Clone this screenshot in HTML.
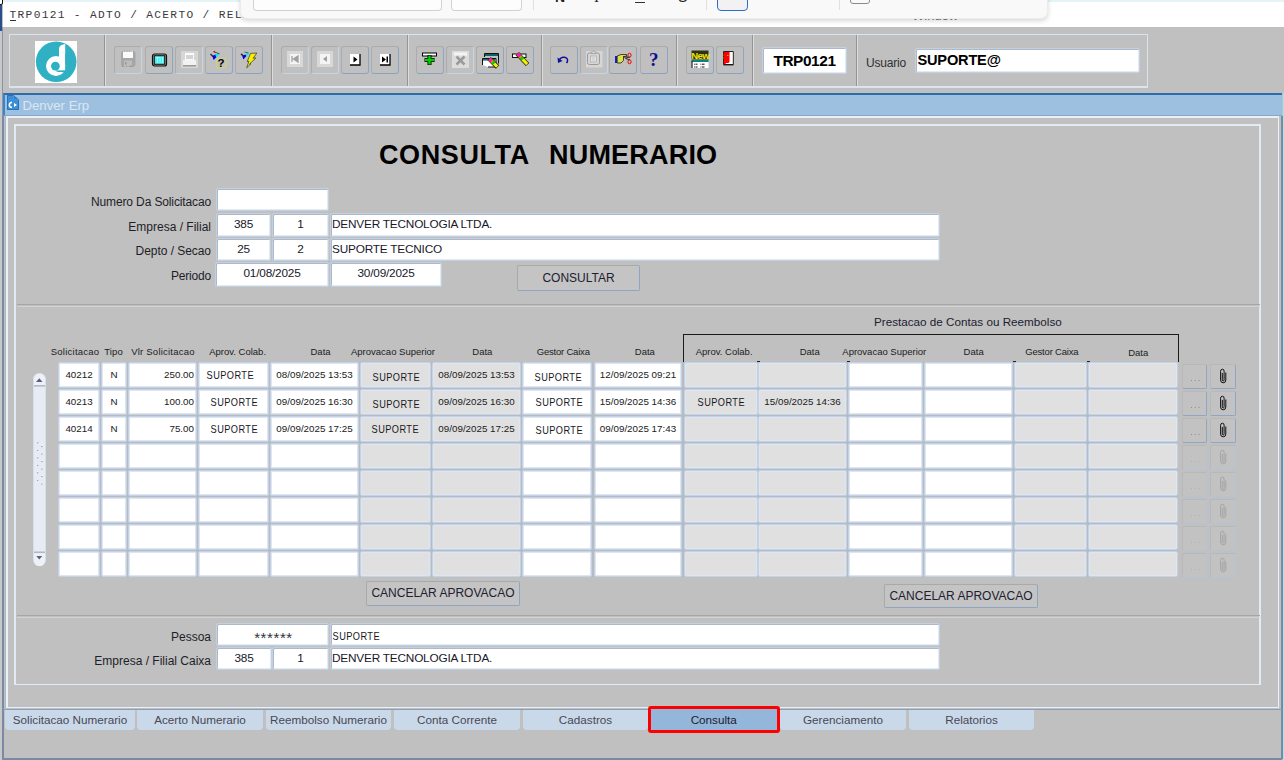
<!DOCTYPE html>
<html><head><meta charset="utf-8">
<style>
*{margin:0;padding:0;box-sizing:border-box}
html,body{width:1284px;height:760px;overflow:hidden;background:#c0c0c0;font-family:"Liberation Sans",sans-serif;color:#202020}
.a{position:absolute}
.fld{position:absolute;background:#fff;border:1px solid #c2d0e2;border-radius:2px;box-shadow:inset 1px 1px 0 #adb9c8,inset -1px -1px 0 #e2eaf4;font-size:11.8px;letter-spacing:-0.2px;color:#18182a;line-height:21px;white-space:nowrap;overflow:hidden}
.lbl{position:absolute;font-size:12px;letter-spacing:0;color:#1e1e28;white-space:nowrap;text-align:right;line-height:14px}
.btn{position:absolute;border:1px solid #a9a9a9;border-right-color:#8ea6c4;border-bottom-color:#8ea6c4;border-radius:2px;background:#c4c4c4;font-size:12px;color:#202030;text-align:center;white-space:nowrap}
.tb{position:absolute;top:46px;width:28px;height:28px;border:1px solid #acacac;border-right:1.5px solid #8fa6c2;border-bottom:1.5px solid #8ca3c0;border-radius:3px}
.sep{position:absolute;top:35px;width:2px;height:51px;border-left:1px solid #959595;border-right:1px solid #dcdcdc}
.hd{position:absolute;font-size:9.5px;color:#202020;white-space:nowrap}
.c{position:absolute;background:#fff;border:1px solid #c4d2e4;border-radius:2px;box-shadow:inset 1px 1px 0 #dde6f2,inset -1px -1px 0 #dde6f2;font-size:9.8px;color:#202020;white-space:nowrap;overflow:hidden;text-align:center}
.g{background:#e0e0e0}
.s{position:relative;display:inline-block;font-size:10.6px;transform:scaleX(0.87);letter-spacing:0.5px;color:#18181c}
.tab{position:absolute;top:710px;height:20px;background:#cad9ea;border-radius:0 0 4px 4px;font-size:11.7px;letter-spacing:0;color:#484854;text-align:center;line-height:20px}
</style></head><body>

<!-- window title strip -->
<div class="a" style="left:3px;top:0;width:1281px;height:27px;background:#fff"></div>
<div class="a" style="left:3px;top:0;width:1281px;height:2px;background:#e4f4f8"></div>
<div class="a" style="left:0;top:5px;width:2px;height:26px;background:#2a4f8a"></div>
<div class="a" style="left:-3px;top:-2px;width:6px;height:7px;background:#fff;border:1px solid #111;border-radius:2px"></div>
<div class="a" style="left:9.5px;top:8px;font:11.2px/14px 'Liberation Mono',monospace;letter-spacing:1.33px;color:#3a3a3a;white-space:pre">TRP0121 - ADTO / ACERTO / RELATORIO DE VIAGEM</div>
<div class="a" style="left:10px;top:20px;width:6px;height:1px;background:#333"></div>

<!-- floating popup -->
<div class="a" style="left:912px;top:8px;font-size:13px;color:#777">Window</div>
<div class="a" style="left:240px;top:-12px;width:808px;height:31px;background:#f9f9f9;border-radius:7px;box-shadow:0 2px 5px rgba(0,0,0,0.16);border:1px solid #ececec"></div>
<div class="a" style="left:253px;top:-6px;width:189px;height:17px;background:#fdfdfd;border:1px solid #d2d2d2;border-top-color:#e6e6e6;border-radius:4px"></div>
<div class="a" style="left:451px;top:-6px;width:71px;height:17px;background:#fdfdfd;border:1px solid #d2d2d2;border-top-color:#e6e6e6;border-radius:4px"></div>
<div class="a" style="left:533px;top:0;width:1px;height:10px;background:#e0e0e0"></div>
<div class="a" style="left:555px;top:-11.5px;font-size:14px;font-weight:bold;color:#222">N</div>
<div class="a" style="left:594px;top:-11.5px;font-family:'Liberation Serif';font-size:15px;color:#222">I</div>
<div class="a" style="left:635px;top:-13px;font-size:14px;color:#222">U</div>
<div class="a" style="left:635px;top:1.5px;width:10px;height:1px;background:#333"></div>
<div class="a" style="left:678px;top:-11.5px;font-size:14px;color:#222">S</div>
<div class="a" style="left:706px;top:0;width:1px;height:10px;background:#e0e0e0"></div>
<div class="a" style="left:717px;top:-8px;width:31px;height:19px;background:#f2f2f2;border:1px solid #2a6fc4;border-radius:4px"></div>
<div class="a" style="left:839px;top:0;width:1px;height:10px;background:#e0e0e0"></div>
<div class="a" style="left:850px;top:-8px;width:20px;height:12px;background:#fafafa;border:1px solid #8a8a8a;border-radius:3px"></div>

<!-- left window frame -->
<div class="a" style="left:0;top:31px;width:2px;height:729px;background:#c8c8c8"></div>
<div class="a" style="left:2px;top:27px;width:1px;height:733px;background:#8a96a4"></div>

<!-- toolbar panel -->
<div class="a" style="left:9px;top:34px;width:1139px;height:54px;border:1px solid #dae4f0;border-bottom-width:2px"></div>


<!-- separators -->
<div class="sep" style="left:104px"></div>
<div class="sep" style="left:271px"></div>
<div class="sep" style="left:407px"></div>
<div class="sep" style="left:541px"></div>
<div class="sep" style="left:676px"></div>
<div class="sep" style="left:752px"></div>
<div class="sep" style="left:856px"></div>

<!-- logo -->
<div class="a" style="left:35px;top:41px;width:42px;height:42px;background:#fff">
<svg width="42" height="42" viewBox="0 0 42 42"><circle cx="21.2" cy="20.8" r="20.3" fill="#30b0c3"/>
<circle cx="21" cy="25" r="10" fill="#fff"/>
<path d="M24 7.5 C24 5.2 26.5 3.6 30.2 3 V29.3 H24 Z" fill="#fff"/>
<rect x="30.2" y="13" width="3" height="24" fill="#30b0c3"/>
<circle cx="20.4" cy="25.1" r="4.4" fill="#30b0c3"/>
<path d="M20.4 29.4 L31 29.3 L31 33 C29 31.2 27 30.8 24.5 31 C23 31.1 21.5 30.5 20.4 29.4 Z" fill="#30b0c3"/></svg></div>

<!-- toolbar buttons -->
<div class="tb" style="left:114px;border-right-color:#c6d4e6;border-bottom-color:#c6d4e6"><svg class="a" style="left:5px;top:3px" width="17" height="18" viewBox="0 0 17 18"><rect x="1" y="1" width="14.5" height="15.5" rx="2" fill="#a6a6a6"/><rect x="3" y="1.5" width="10" height="6.5" fill="#fafafa"/><path d="M4 1.2h1M6.5 1.2h1M9 1.2h1" stroke="#888" stroke-width="0.8"/><rect x="4" y="10.5" width="8" height="6" fill="#bcbcbc"/><rect x="5" y="12" width="1.5" height="2.5" fill="#9a9a9a"/><path d="M2 16.3h1.5M6 16.3h1M9 16.3h4" stroke="#8a8a8a" stroke-width="0.8"/></svg></div>
<div class="tb" style="left:145px"><svg class="a" style="left:5px;top:5px" width="18" height="16" viewBox="0 0 18 16"><rect x="1.5" y="2" width="14" height="12" rx="2" fill="#9a9a9a" stroke="#101010" stroke-width="1.2"/><rect x="3.3" y="3.8" width="10.4" height="8.4" fill="none" stroke="#101010" stroke-width="1.1"/><rect x="3.9" y="4.4" width="9.2" height="7.2" fill="#48f0f0"/><path d="M5 5.5h3M6.5 5v6M9 5v6M11.5 5v6" stroke="#b8ffff" stroke-width="0.7"/></svg></div>
<div class="tb" style="left:175px;border-right-color:#c6d4e6;border-bottom-color:#c6d4e6"><svg class="a" style="left:5px;top:4px" width="18" height="18" viewBox="0 0 18 18"><rect x="0" y="0" width="17" height="17" fill="#d6d6d6"/><rect x="4" y="2" width="9" height="7" fill="#fafafa"/><path d="M5 5h7M5 7h7" stroke="#9a9a9a" stroke-width="0.8"/><rect x="2" y="9" width="13" height="5" fill="#f2f2f2"/><rect x="2" y="14" width="13" height="1.5" fill="#9a9a9a"/></svg></div>
<div class="tb" style="left:205px"><svg class="a" style="left:-1px;top:-1px" width="28" height="28" viewBox="0 0 28 28"><path d="M5.5 8 L8 10.5" stroke="#383838" stroke-width="1.6"/><path d="M7.3 10 L11 8.3 L11.6 11 L8.6 14 Z" fill="#0000e8"/><path d="M10 8.6 L14.6 7.6 L12.2 11 L11.2 11 Z" fill="#00f0f0"/><path d="M8.8 5.8 L14.5 7.8" stroke="#303030" stroke-width="0.8"/><circle cx="9.3" cy="5.7" r="0.9" fill="#d02020"/><rect x="11.8" y="12.8" width="9" height="8.8" fill="none" stroke="#f0f000" stroke-width="0.9" stroke-dasharray="0.9 1.1"/><text x="12.6" y="20.6" font-family="Liberation Sans" font-weight="bold" font-size="11.5" fill="#000">?</text></svg></div>
<div class="tb" style="left:235px"><svg class="a" style="left:-1px;top:-1px" width="28" height="28" viewBox="0 0 28 28"><path d="M6 8 L8.5 9.8" stroke="#303030" stroke-width="1.6"/><path d="M7.3 10 L10.5 8.2 L11.5 10 L8.3 13.5 Z" fill="#0000e8"/><path d="M9.7 8.2 L14 6.2 L13 9.2 L11.3 9.6 Z" fill="#00f0f0"/><path d="M9.5 6 L13.5 7" stroke="#404040" stroke-width="0.8"/><path d="M15.5 7.4 L21.8 7 L18.2 12.2 L20.8 12 L14.6 18 L16 17.7 L11.7 21.8 L13.9 15.3 L12.2 15.6 Z" fill="#f4f000" stroke="#1a1a1a" stroke-width="0.6"/></svg></div>

<div class="tb" style="left:281px;border-right-color:#c6d4e6;border-bottom-color:#c6d4e6"><svg class="a" style="left:4px;top:3px" width="18" height="18" viewBox="0 0 18 18"><rect x="1" y="1" width="16" height="16" fill="#d8d8d8"/><rect x="4" y="4" width="10" height="10" fill="#f4f4f4"/><path d="M6 6v6M12 6v6L7.5 9Z" fill="#a0a0a0" stroke="#a0a0a0" stroke-width="1.3"/></svg></div>
<div class="tb" style="left:311px;border-right-color:#c6d4e6;border-bottom-color:#c6d4e6"><svg class="a" style="left:4px;top:3px" width="18" height="18" viewBox="0 0 18 18"><rect x="1" y="1" width="16" height="16" fill="#d8d8d8"/><rect x="4" y="4" width="10" height="10" fill="#f4f4f4"/><path d="M11 6v6L7 9Z" fill="#a0a0a0"/></svg></div>
<div class="tb" style="left:341px"><svg class="a" style="left:6px;top:5px" width="16" height="16" viewBox="0 0 16 16"><rect x="2" y="2" width="10" height="11" fill="#fff"/><path d="M12 2v11H2" fill="none" stroke="#000" stroke-width="1.3"/><path d="M5.5 4.5v6L9.5 7.5Z" fill="#000"/></svg></div>
<div class="tb" style="left:371px"><svg class="a" style="left:6px;top:5px" width="16" height="16" viewBox="0 0 16 16"><rect x="2" y="2" width="10" height="11" fill="#fff"/><path d="M12 2v11H2" fill="none" stroke="#000" stroke-width="1.3"/><path d="M4 4.5v6L8 7.5Z M8.5 4.5h1.5v6H8.5Z" fill="#000"/></svg></div>

<div class="tb" style="left:416px"><svg class="a" style="left:4px;top:4px" width="18" height="18" viewBox="0 0 18 18"><rect x="1.5" y="2" width="14" height="3" fill="#fff" stroke="#000" stroke-width="1"/><path d="M8.5 4v10M3.5 9h10" stroke="#000" stroke-width="4"/><path d="M8.5 4.5v9M4 9h9" stroke="#00d000" stroke-width="2.4"/></svg></div>
<div class="tb" style="left:446px;border-right-color:#c6d4e6;border-bottom-color:#c6d4e6"><svg class="a" style="left:5px;top:4px" width="18" height="18" viewBox="0 0 18 18"><rect x="0" y="0" width="17" height="17" fill="#dcdcdc"/><rect x="2" y="1.5" width="13" height="3" fill="#f4f4f4"/><path d="M4.5 5.5L12.5 13.5M12.5 5.5L4.5 13.5" stroke="#9a9a9a" stroke-width="2.5"/></svg></div>
<div class="tb" style="left:476px"><svg class="a" style="left:2px;top:2px" width="22" height="20" viewBox="0 0 22 20"><path d="M5.5 8 V4.5 H19.5 V14.5" fill="none" stroke="#111" stroke-width="1"/><rect x="6" y="5" width="13" height="2" fill="#0c6464"/><path d="M3.5 16 V9.5 H17 V18 H9" fill="#fff" stroke="#111" stroke-width="1"/><rect x="4" y="10" width="12.5" height="1.6" fill="#187070"/><path d="M10.2 9.7 L18.5 18" stroke="#111" stroke-width="4.6"/><path d="M10.5 10 L18.2 17.7" stroke="#f0f000" stroke-width="3.2"/><path d="M10.5 10 L12.8 12.3" stroke="#ff10c0" stroke-width="3.2"/><path d="M12.7 12.2 L13.5 13" stroke="#ff7000" stroke-width="3.2"/><path d="M13.5 13 L15.2 14.7" stroke="#00d000" stroke-width="3.2"/></svg></div>
<div class="tb" style="left:506px"><svg class="a" style="left:1px;top:2px" width="22" height="20" viewBox="0 0 22 20"><rect x="4.5" y="5" width="13.5" height="3.5" fill="#fff" stroke="#111" stroke-width="1"/><path d="M9.3 4.6 L19.5 15.5" stroke="#111" stroke-width="4.6"/><path d="M9.6 4.9 L19.2 15.2" stroke="#f0f000" stroke-width="3.2"/><path d="M9.6 4.9 L12.2 7.7" stroke="#ff10c0" stroke-width="3.2"/><path d="M12.1 7.6 L12.9 8.5" stroke="#ff7000" stroke-width="3.2"/><path d="M12.9 8.5 L14.8 10.5" stroke="#00d000" stroke-width="3.2"/></svg></div>

<div class="tb" style="left:550px"><svg class="a" style="left:4px;top:5px" width="16" height="16" viewBox="0 0 16 16"><path d="M4.5 7.5 C6 5 9.5 4.5 11.5 6 C13 7.2 12.8 9.5 11.5 11" fill="none" stroke="#10109a" stroke-width="1.5"/><path d="M2.5 5.5 L3 11 L7.5 9 Z" fill="#10109a"/></svg></div>
<div class="tb" style="left:580px;border-right-color:#c6d4e6;border-bottom-color:#c6d4e6"><svg class="a" style="left:4px;top:3px" width="18" height="18" viewBox="0 0 18 18"><rect x="1" y="1" width="16.5" height="16.5" fill="#d6d6d6"/><rect x="2.5" y="3" width="12" height="11.5" rx="2" fill="none" stroke="#9a9a9a" stroke-width="1"/><path d="M6 3.5 V2.2 Q8.5 0.5 11 2.2 V3.5 Z" fill="#dcdcdc" stroke="#9a9a9a" stroke-width="0.8"/><rect x="5.5" y="6" width="6" height="6" fill="#e4e4e4" stroke="#a8a8a8" stroke-width="0.7"/><path d="M7 8h3M7 10h3" stroke="#b0b0b0" stroke-width="0.6"/></svg></div>
<div class="tb" style="left:609px"><svg class="a" style="left:3px;top:5px" width="22" height="18" viewBox="0 0 22 18"><rect x="2" y="4" width="2.2" height="7" fill="#1020d0"/><path d="M4.2 4 L8 2.5 L13.5 2.5 L13.5 4.2 L10.5 4.5 L10.5 8.5 L8 11 L4.2 11 Z" fill="#e0e040" stroke="#202020" stroke-width="0.8"/><path d="M10 5 H15" stroke="#202020" stroke-width="1"/><ellipse cx="16.5" cy="3.2" rx="1.6" ry="2" fill="none" stroke="#f00000" stroke-width="1"/><ellipse cx="16.5" cy="9.8" rx="1.6" ry="2" fill="none" stroke="#f00000" stroke-width="1"/><path d="M12.5 6.5 L17 5 M12.5 6.5 L17 8" stroke="#202020" stroke-width="0.8"/></svg></div>
<div class="tb" style="left:640px"><svg class="a" style="left:7px;top:4px" width="14" height="18" viewBox="0 0 14 18"><text x="1" y="15" font-family="Liberation Serif" font-weight="bold" font-size="19" fill="#10108c">?</text></svg></div>

<div class="tb" style="left:686px"><svg class="a" style="left:-1px;top:-1px" width="28" height="28" viewBox="0 0 28 28"><rect x="5.5" y="4.5" width="17" height="9" fill="#303018"/><text x="5.2" y="12.6" font-family="Liberation Sans" font-weight="bold" font-size="9.6" fill="#e8e800" letter-spacing="-0.6">New</text><rect x="5.5" y="14" width="17" height="2" fill="#108080"/><rect x="6.5" y="16" width="16" height="6" fill="#fff"/><rect x="5.5" y="15" width="1" height="7" fill="#111"/><path d="M8 18.2h0.8M9.5 18.2h2M14.5 18.2h0.8M16 18.2h2.5M8 21h0.8M9.5 21h2M14.5 21h0.8M16 21h2.5" stroke="#111" stroke-width="1"/></svg></div>
<div class="tb" style="left:716px"><svg class="a" style="left:-1px;top:-1px" width="28" height="28" viewBox="0 0 28 28"><path d="M7.5 18.5 V5.5 H17.3 V18.5 Z" fill="#fff" stroke="#222" stroke-width="1"/><path d="M7.8 6 H13.5 V16 L12.5 17 L10 17 L9.3 18.2 H7.8 Z" fill="#ff0000"/><circle cx="11.8" cy="9.5" r="0.6" fill="#f0f000"/><rect x="6.3" y="8.6" width="1.2" height="0.9" fill="#c8c800"/><rect x="6.3" y="11.5" width="1.2" height="0.9" fill="#c8c800"/><rect x="7.5" y="18.5" width="10" height="0.9" fill="#111"/></svg></div>

<div class="fld" style="left:762px;top:47px;width:85px;height:27px;font-weight:bold;font-size:15.4px;letter-spacing:-0.4px;color:#000;text-align:center;line-height:25px">TRP0121</div>
<div class="lbl" style="left:866px;top:56px;font-size:12px;letter-spacing:-0.2px;color:#303030">Usuario</div>
<div class="fld" style="left:915px;top:48px;width:225px;height:25px;font-weight:bold;font-size:14.6px;color:#000;line-height:23px;padding-left:1.5px">SUPORTE@</div>

<!-- Denver Erp title -->
<div class="a" style="left:3px;top:93px;width:1279px;height:23px;background:#9dc0e0;border-top:2px solid #2f6cae;border-bottom:1px solid #88a8c8;border-left:2px solid #3a86cc"></div>
<svg class="a" style="left:7px;top:95px" width="13" height="15" viewBox="0 0 13 15"><path d="M0 0 H6.5 V4.5 H12 V15 H0 Z" fill="#3a8fd6"/><path d="M6.5 0 L12 4.5 H6.5 Z" fill="#2f7ec4"/><path d="M0.5 0.5 H6.2 M0.5 0.5 V14.5 H11.5 V5" fill="none" stroke="#2a72b8" stroke-width="1"/><path d="M5 7.2 C3 7.5 2.3 9 2.3 10 C2.3 11.2 3 12.3 5 12.6" fill="none" stroke="#fff" stroke-width="1.5"/><path d="M7 8 L10 10 L7 12 Z" fill="#fff"/></svg>
<div class="a" style="left:22.5px;top:98px;font-size:13.2px;line-height:15px;color:#dae6f4;white-space:nowrap">Denver Erp</div>


<!-- main window frame -->
<div class="a" style="left:2px;top:116px;width:2px;height:643px;background:#7a8aa2"></div>
<div class="a" style="left:5px;top:116px;width:1px;height:592px;background:#a8b8c8"></div>
<div class="a" style="left:6px;top:116px;width:1273px;height:592px;border:1px solid #eaf0f8;border-width:2px 1px 1px 2px"></div>
<div class="a" style="left:1281px;top:116px;width:2px;height:643px;background:#7a8aa2"></div>
<div class="a" style="left:1283px;top:93px;width:1px;height:667px;background:#a0e8f0"></div>
<div class="a" style="left:14px;top:124px;width:1247px;height:561px;border:1px solid #e2eaf4;border-width:2px 2px 1px 2px"></div>
<div class="a" style="left:17px;top:304px;width:1243px;height:1px;background:#a6a6a6"></div>
<div class="a" style="left:17px;top:306px;width:1243px;height:1px;background:#d2d2d2"></div>
<div class="a" style="left:17px;top:615px;width:1243px;height:1px;background:#a6a6a6"></div>
<div class="a" style="left:17px;top:617px;width:1243px;height:1px;background:#d2d2d2"></div>
<div class="a" style="left:3px;top:709px;width:1279px;height:1px;background:#88a0b8"></div>
<div class="a" style="left:3px;top:758px;width:1279px;height:2px;background:#7a8aa2"></div>

<!-- heading -->
<div class="a" style="left:379px;top:140px;font-size:27px;font-weight:bold;color:#000;white-space:pre;letter-spacing:0.6px">CONSULTA</div>
<div class="a" style="left:549px;top:140px;font-size:27px;font-weight:bold;color:#000;white-space:pre;letter-spacing:0.2px">NUMERARIO</div>

<!-- upper form -->
<div class="lbl" style="right:1073px;top:195px;letter-spacing:-0.13px">Numero Da Solicitacao</div>
<div class="lbl" style="right:1073px;top:220px">Empresa / Filial</div>
<div class="lbl" style="right:1073px;top:244px;letter-spacing:-0.05px">Depto / Secao</div>
<div class="lbl" style="right:1073px;top:269px;letter-spacing:-0.2px">Periodo</div>

<div class="fld" style="left:216px;top:188px;width:113px;height:23px"></div>
<div class="fld" style="left:216px;top:213px;width:55px;height:24px;text-align:center">385</div>
<div class="fld" style="left:272px;top:213px;width:57px;height:24px;text-align:center">1</div>
<div class="fld" style="left:330px;top:213px;width:610px;height:24px;padding-left:1px">DENVER TECNOLOGIA LTDA.</div>
<div class="fld" style="left:216px;top:238px;width:55px;height:23px;text-align:center">25</div>
<div class="fld" style="left:272px;top:238px;width:57px;height:23px;text-align:center">2</div>
<div class="fld" style="left:330px;top:238px;width:610px;height:23px;padding-left:1px">SUPORTE TECNICO</div>
<div class="fld" style="left:215px;top:262px;width:114px;height:25px;text-align:center;line-height:21px">01/08/2025</div>
<div class="fld" style="left:330px;top:262px;width:112px;height:25px;text-align:center;line-height:21px">30/09/2025</div>
<div class="btn" style="left:517px;top:265px;width:123px;height:26px;line-height:24px">CONSULTAR</div>

<!--TABLE-->
<div class="hd" style="left:50.7px;top:346px;letter-spacing:0.25px">Solicitacao</div>
<div class="hd" style="left:104.3px;top:346px;letter-spacing:0.1px">Tipo</div>
<div class="hd" style="left:131.2px;top:346px;letter-spacing:0.22px">Vlr Solicitacao</div>
<div class="hd" style="left:209.2px;top:346px;letter-spacing:0px">Aprov. Colab.</div>
<div class="hd" style="left:310.5px;top:346px;letter-spacing:0px">Data</div>
<div class="hd" style="left:351.0px;top:346px;letter-spacing:0px">Aprovacao Superior</div>
<div class="hd" style="left:472.3px;top:346px;letter-spacing:0px">Data</div>
<div class="hd" style="left:536.7px;top:346px;letter-spacing:-0.2px">Gestor Caixa</div>
<div class="hd" style="left:634.8px;top:346px;letter-spacing:0px">Data</div>
<div class="hd" style="left:695.7px;top:346px;letter-spacing:0px">Aprov. Colab.</div>
<div class="hd" style="left:799.7px;top:346px;letter-spacing:0px">Data</div>
<div class="hd" style="left:842.3px;top:346px;letter-spacing:0px">Aprovacao Superior</div>
<div class="hd" style="left:963.6px;top:346px;letter-spacing:0px">Data</div>
<div class="hd" style="left:1025.3px;top:346px;letter-spacing:-0.2px">Gestor Caixa</div>
<div class="hd" style="left:1128.2px;top:347px;letter-spacing:0px">Data</div>
<div class="a" style="left:874px;top:315px;font-size:11.7px;color:#202030;white-space:nowrap">Prestacao de Contas ou Reembolso</div>
<div class="a" style="left:683px;top:334px;width:496px;height:28px;border:1px solid #1a1a1a;border-bottom:none"></div>
<div class="a" style="left:757px;top:361px;width:3px;height:1px;background:#222"></div>
<div class="a" style="left:847px;top:361px;width:3px;height:1px;background:#222"></div>
<div class="a" style="left:1013px;top:361px;width:3px;height:1px;background:#222"></div>
<div class="a" style="left:1087px;top:361px;width:3px;height:1px;background:#222"></div>
<div class="a" style="left:58px;top:362px;width:1120px;height:215px;background:#b6bcc4"></div>
<div class="c" style="left:58px;top:362px;width:42px;height:26px;line-height:24px">40212</div>
<div class="c" style="left:101px;top:362px;width:26px;height:26px;line-height:24px">N</div>
<div class="c" style="left:128px;top:362px;width:69px;height:26px;line-height:24px;text-align:right;padding-right:2px">250.00</div>
<div class="c" style="left:198px;top:362px;width:71px;height:26px;line-height:24px"><span class="s" style="left:-3px;top:0px">SUPORTE</span></div>
<div class="c" style="left:270px;top:362px;width:89px;height:26px;line-height:24px">08/09/2025 13:53</div>
<div class="c g" style="left:360px;top:362px;width:71px;height:26px;line-height:24px"><span class="s" style="left:1px;top:2px">SUPORTE</span></div>
<div class="c g" style="left:432px;top:362px;width:89px;height:26px;line-height:24px">08/09/2025 13:53</div>
<div class="c" style="left:522px;top:362px;width:70px;height:26px;line-height:24px"><span class="s" style="left:1px;top:1.5px">SUPORTE</span></div>
<div class="c" style="left:594px;top:362px;width:88px;height:26px;line-height:24px">12/09/2025 09:21</div>
<div class="c g" style="left:684px;top:362px;width:74px;height:26px;line-height:24px"></div>
<div class="c g" style="left:758px;top:362px;width:89px;height:26px;line-height:24px"></div>
<div class="c" style="left:848px;top:362px;width:75px;height:26px;line-height:24px"></div>
<div class="c" style="left:924px;top:362px;width:89px;height:26px;line-height:24px"></div>
<div class="c g" style="left:1014px;top:362px;width:73px;height:26px;line-height:24px"></div>
<div class="c g" style="left:1088px;top:362px;width:90px;height:26px;line-height:24px"></div>
<div class="btn" style="left:1182px;top:364px;width:25px;height:25px;border-color:#b8b8b8 #8ea6c4 #8ea6c4 #b8b8b8;background:#c2c2c2"><div class="a" style="left:7.5px;top:15px;width:1.6px;height:1.3px;background:#9a8a7a;box-shadow:3.8px 0 0 #9a8a7a,7.6px 0 0 #9a8a7a"></div></div>
<div class="btn" style="left:1210px;top:364px;width:26px;height:25px;border-color:#b8b8b8 #8ea6c4 #8ea6c4 #b8b8b8;background:#c2c2c2"><svg class="a" style="left:7px;top:3px" width="10" height="16" viewBox="0 0 10 16"><path d="M4.3 5 V11.8 Q4.3 13 5.2 13 Q6.1 13 6.1 11.8 V3.2 Q6.1 1.2 4.6 1.2 Q2.6 1.2 2.6 3.2 V12 Q2.6 14.8 5.2 14.8 Q7.8 14.8 7.8 12 V4.5" fill="none" stroke="#101010" stroke-width="1"/></svg></div>
<div class="c" style="left:58px;top:389px;width:42px;height:26px;line-height:24px">40213</div>
<div class="c" style="left:101px;top:389px;width:26px;height:26px;line-height:24px">N</div>
<div class="c" style="left:128px;top:389px;width:69px;height:26px;line-height:24px;text-align:right;padding-right:2px">100.00</div>
<div class="c" style="left:198px;top:389px;width:71px;height:26px;line-height:24px"><span class="s" style="left:1px;top:0px">SUPORTE</span></div>
<div class="c" style="left:270px;top:389px;width:89px;height:26px;line-height:24px">09/09/2025 16:30</div>
<div class="c g" style="left:360px;top:389px;width:71px;height:26px;line-height:24px"><span class="s" style="left:1px;top:1.5px">SUPORTE</span></div>
<div class="c g" style="left:432px;top:389px;width:89px;height:26px;line-height:24px">09/09/2025 16:30</div>
<div class="c" style="left:522px;top:389px;width:70px;height:26px;line-height:24px"><span class="s" style="left:2px;top:0px">SUPORTE</span></div>
<div class="c" style="left:594px;top:389px;width:88px;height:26px;line-height:24px">15/09/2025 14:36</div>
<div class="c g" style="left:684px;top:389px;width:74px;height:26px;line-height:24px"><span class="s" style="left:0px;top:0px">SUPORTE</span></div>
<div class="c g" style="left:758px;top:389px;width:89px;height:26px;line-height:24px">15/09/2025 14:36</div>
<div class="c" style="left:848px;top:389px;width:75px;height:26px;line-height:24px"></div>
<div class="c" style="left:924px;top:389px;width:89px;height:26px;line-height:24px"></div>
<div class="c g" style="left:1014px;top:389px;width:73px;height:26px;line-height:24px"></div>
<div class="c g" style="left:1088px;top:389px;width:90px;height:26px;line-height:24px"></div>
<div class="btn" style="left:1182px;top:391px;width:25px;height:25px;border-color:#b8b8b8 #8ea6c4 #8ea6c4 #b8b8b8;background:#c2c2c2"><div class="a" style="left:7.5px;top:15px;width:1.6px;height:1.3px;background:#9a8a7a;box-shadow:3.8px 0 0 #9a8a7a,7.6px 0 0 #9a8a7a"></div></div>
<div class="btn" style="left:1210px;top:391px;width:26px;height:25px;border-color:#b8b8b8 #8ea6c4 #8ea6c4 #b8b8b8;background:#c2c2c2"><svg class="a" style="left:7px;top:3px" width="10" height="16" viewBox="0 0 10 16"><path d="M4.3 5 V11.8 Q4.3 13 5.2 13 Q6.1 13 6.1 11.8 V3.2 Q6.1 1.2 4.6 1.2 Q2.6 1.2 2.6 3.2 V12 Q2.6 14.8 5.2 14.8 Q7.8 14.8 7.8 12 V4.5" fill="none" stroke="#101010" stroke-width="1"/></svg></div>
<div class="c" style="left:58px;top:416px;width:42px;height:26px;line-height:24px">40214</div>
<div class="c" style="left:101px;top:416px;width:26px;height:26px;line-height:24px">N</div>
<div class="c" style="left:128px;top:416px;width:69px;height:26px;line-height:24px;text-align:right;padding-right:2px">75.00</div>
<div class="c" style="left:198px;top:416px;width:71px;height:26px;line-height:24px"><span class="s" style="left:1px;top:0px">SUPORTE</span></div>
<div class="c" style="left:270px;top:416px;width:89px;height:26px;line-height:24px">09/09/2025 17:25</div>
<div class="c g" style="left:360px;top:416px;width:71px;height:26px;line-height:24px"><span class="s" style="left:0px;top:0px">SUPORTE</span></div>
<div class="c g" style="left:432px;top:416px;width:89px;height:26px;line-height:24px">09/09/2025 17:25</div>
<div class="c" style="left:522px;top:416px;width:70px;height:26px;line-height:24px"><span class="s" style="left:2px;top:1px">SUPORTE</span></div>
<div class="c" style="left:594px;top:416px;width:88px;height:26px;line-height:24px">09/09/2025 17:43</div>
<div class="c g" style="left:684px;top:416px;width:74px;height:26px;line-height:24px"></div>
<div class="c g" style="left:758px;top:416px;width:89px;height:26px;line-height:24px"></div>
<div class="c" style="left:848px;top:416px;width:75px;height:26px;line-height:24px"></div>
<div class="c" style="left:924px;top:416px;width:89px;height:26px;line-height:24px"></div>
<div class="c g" style="left:1014px;top:416px;width:73px;height:26px;line-height:24px"></div>
<div class="c g" style="left:1088px;top:416px;width:90px;height:26px;line-height:24px"></div>
<div class="btn" style="left:1182px;top:418px;width:25px;height:25px;border-color:#b8b8b8 #8ea6c4 #8ea6c4 #b8b8b8;background:#c2c2c2"><div class="a" style="left:7.5px;top:15px;width:1.6px;height:1.3px;background:#9a8a7a;box-shadow:3.8px 0 0 #9a8a7a,7.6px 0 0 #9a8a7a"></div></div>
<div class="btn" style="left:1210px;top:418px;width:26px;height:25px;border-color:#b8b8b8 #8ea6c4 #8ea6c4 #b8b8b8;background:#c2c2c2"><svg class="a" style="left:7px;top:3px" width="10" height="16" viewBox="0 0 10 16"><path d="M4.3 5 V11.8 Q4.3 13 5.2 13 Q6.1 13 6.1 11.8 V3.2 Q6.1 1.2 4.6 1.2 Q2.6 1.2 2.6 3.2 V12 Q2.6 14.8 5.2 14.8 Q7.8 14.8 7.8 12 V4.5" fill="none" stroke="#101010" stroke-width="1"/></svg></div>
<div class="c" style="left:58px;top:443px;width:42px;height:26px;line-height:24px"></div>
<div class="c" style="left:101px;top:443px;width:26px;height:26px;line-height:24px"></div>
<div class="c" style="left:128px;top:443px;width:69px;height:26px;line-height:24px;text-align:right;padding-right:2px"></div>
<div class="c" style="left:198px;top:443px;width:71px;height:26px;line-height:24px"></div>
<div class="c" style="left:270px;top:443px;width:89px;height:26px;line-height:24px"></div>
<div class="c g" style="left:360px;top:443px;width:71px;height:26px;line-height:24px"></div>
<div class="c g" style="left:432px;top:443px;width:89px;height:26px;line-height:24px"></div>
<div class="c" style="left:522px;top:443px;width:70px;height:26px;line-height:24px"></div>
<div class="c" style="left:594px;top:443px;width:88px;height:26px;line-height:24px"></div>
<div class="c g" style="left:684px;top:443px;width:74px;height:26px;line-height:24px"></div>
<div class="c g" style="left:758px;top:443px;width:89px;height:26px;line-height:24px"></div>
<div class="c" style="left:848px;top:443px;width:75px;height:26px;line-height:24px"></div>
<div class="c" style="left:924px;top:443px;width:89px;height:26px;line-height:24px"></div>
<div class="c g" style="left:1014px;top:443px;width:73px;height:26px;line-height:24px"></div>
<div class="c g" style="left:1088px;top:443px;width:90px;height:26px;line-height:24px"></div>
<div class="btn" style="left:1182px;top:445px;width:25px;height:25px;border-color:#b8b8b8 #b4c4d8 #b4c4d8 #b8b8b8;background:#c2c2c2"><div class="a" style="left:7.5px;top:15px;width:1.6px;height:1.3px;background:#b4b0ac;box-shadow:3.8px 0 0 #b4b0ac,7.6px 0 0 #b4b0ac"></div></div>
<div class="btn" style="left:1210px;top:445px;width:26px;height:25px;border-color:#b8b8b8 #b4c4d8 #b4c4d8 #b8b8b8;background:#c2c2c2"><svg class="a" style="left:7px;top:3px" width="10" height="16" viewBox="0 0 10 16"><path d="M4.3 5 V11.8 Q4.3 13 5.2 13 Q6.1 13 6.1 11.8 V3.2 Q6.1 1.2 4.6 1.2 Q2.6 1.2 2.6 3.2 V12 Q2.6 14.8 5.2 14.8 Q7.8 14.8 7.8 12 V4.5" fill="none" stroke="#a4a4a4" stroke-width="1"/></svg></div>
<div class="c" style="left:58px;top:470px;width:42px;height:26px;line-height:24px"></div>
<div class="c" style="left:101px;top:470px;width:26px;height:26px;line-height:24px"></div>
<div class="c" style="left:128px;top:470px;width:69px;height:26px;line-height:24px;text-align:right;padding-right:2px"></div>
<div class="c" style="left:198px;top:470px;width:71px;height:26px;line-height:24px"></div>
<div class="c" style="left:270px;top:470px;width:89px;height:26px;line-height:24px"></div>
<div class="c g" style="left:360px;top:470px;width:71px;height:26px;line-height:24px"></div>
<div class="c g" style="left:432px;top:470px;width:89px;height:26px;line-height:24px"></div>
<div class="c" style="left:522px;top:470px;width:70px;height:26px;line-height:24px"></div>
<div class="c" style="left:594px;top:470px;width:88px;height:26px;line-height:24px"></div>
<div class="c g" style="left:684px;top:470px;width:74px;height:26px;line-height:24px"></div>
<div class="c g" style="left:758px;top:470px;width:89px;height:26px;line-height:24px"></div>
<div class="c" style="left:848px;top:470px;width:75px;height:26px;line-height:24px"></div>
<div class="c" style="left:924px;top:470px;width:89px;height:26px;line-height:24px"></div>
<div class="c g" style="left:1014px;top:470px;width:73px;height:26px;line-height:24px"></div>
<div class="c g" style="left:1088px;top:470px;width:90px;height:26px;line-height:24px"></div>
<div class="btn" style="left:1182px;top:472px;width:25px;height:25px;border-color:#b8b8b8 #b4c4d8 #b4c4d8 #b8b8b8;background:#c2c2c2"><div class="a" style="left:7.5px;top:15px;width:1.6px;height:1.3px;background:#b4b0ac;box-shadow:3.8px 0 0 #b4b0ac,7.6px 0 0 #b4b0ac"></div></div>
<div class="btn" style="left:1210px;top:472px;width:26px;height:25px;border-color:#b8b8b8 #b4c4d8 #b4c4d8 #b8b8b8;background:#c2c2c2"><svg class="a" style="left:7px;top:3px" width="10" height="16" viewBox="0 0 10 16"><path d="M4.3 5 V11.8 Q4.3 13 5.2 13 Q6.1 13 6.1 11.8 V3.2 Q6.1 1.2 4.6 1.2 Q2.6 1.2 2.6 3.2 V12 Q2.6 14.8 5.2 14.8 Q7.8 14.8 7.8 12 V4.5" fill="none" stroke="#a4a4a4" stroke-width="1"/></svg></div>
<div class="c" style="left:58px;top:497px;width:42px;height:26px;line-height:24px"></div>
<div class="c" style="left:101px;top:497px;width:26px;height:26px;line-height:24px"></div>
<div class="c" style="left:128px;top:497px;width:69px;height:26px;line-height:24px;text-align:right;padding-right:2px"></div>
<div class="c" style="left:198px;top:497px;width:71px;height:26px;line-height:24px"></div>
<div class="c" style="left:270px;top:497px;width:89px;height:26px;line-height:24px"></div>
<div class="c g" style="left:360px;top:497px;width:71px;height:26px;line-height:24px"></div>
<div class="c g" style="left:432px;top:497px;width:89px;height:26px;line-height:24px"></div>
<div class="c" style="left:522px;top:497px;width:70px;height:26px;line-height:24px"></div>
<div class="c" style="left:594px;top:497px;width:88px;height:26px;line-height:24px"></div>
<div class="c g" style="left:684px;top:497px;width:74px;height:26px;line-height:24px"></div>
<div class="c g" style="left:758px;top:497px;width:89px;height:26px;line-height:24px"></div>
<div class="c" style="left:848px;top:497px;width:75px;height:26px;line-height:24px"></div>
<div class="c" style="left:924px;top:497px;width:89px;height:26px;line-height:24px"></div>
<div class="c g" style="left:1014px;top:497px;width:73px;height:26px;line-height:24px"></div>
<div class="c g" style="left:1088px;top:497px;width:90px;height:26px;line-height:24px"></div>
<div class="btn" style="left:1182px;top:499px;width:25px;height:25px;border-color:#b8b8b8 #b4c4d8 #b4c4d8 #b8b8b8;background:#c2c2c2"><div class="a" style="left:7.5px;top:15px;width:1.6px;height:1.3px;background:#b4b0ac;box-shadow:3.8px 0 0 #b4b0ac,7.6px 0 0 #b4b0ac"></div></div>
<div class="btn" style="left:1210px;top:499px;width:26px;height:25px;border-color:#b8b8b8 #b4c4d8 #b4c4d8 #b8b8b8;background:#c2c2c2"><svg class="a" style="left:7px;top:3px" width="10" height="16" viewBox="0 0 10 16"><path d="M4.3 5 V11.8 Q4.3 13 5.2 13 Q6.1 13 6.1 11.8 V3.2 Q6.1 1.2 4.6 1.2 Q2.6 1.2 2.6 3.2 V12 Q2.6 14.8 5.2 14.8 Q7.8 14.8 7.8 12 V4.5" fill="none" stroke="#a4a4a4" stroke-width="1"/></svg></div>
<div class="c" style="left:58px;top:524px;width:42px;height:26px;line-height:24px"></div>
<div class="c" style="left:101px;top:524px;width:26px;height:26px;line-height:24px"></div>
<div class="c" style="left:128px;top:524px;width:69px;height:26px;line-height:24px;text-align:right;padding-right:2px"></div>
<div class="c" style="left:198px;top:524px;width:71px;height:26px;line-height:24px"></div>
<div class="c" style="left:270px;top:524px;width:89px;height:26px;line-height:24px"></div>
<div class="c g" style="left:360px;top:524px;width:71px;height:26px;line-height:24px"></div>
<div class="c g" style="left:432px;top:524px;width:89px;height:26px;line-height:24px"></div>
<div class="c" style="left:522px;top:524px;width:70px;height:26px;line-height:24px"></div>
<div class="c" style="left:594px;top:524px;width:88px;height:26px;line-height:24px"></div>
<div class="c g" style="left:684px;top:524px;width:74px;height:26px;line-height:24px"></div>
<div class="c g" style="left:758px;top:524px;width:89px;height:26px;line-height:24px"></div>
<div class="c" style="left:848px;top:524px;width:75px;height:26px;line-height:24px"></div>
<div class="c" style="left:924px;top:524px;width:89px;height:26px;line-height:24px"></div>
<div class="c g" style="left:1014px;top:524px;width:73px;height:26px;line-height:24px"></div>
<div class="c g" style="left:1088px;top:524px;width:90px;height:26px;line-height:24px"></div>
<div class="btn" style="left:1182px;top:526px;width:25px;height:25px;border-color:#b8b8b8 #b4c4d8 #b4c4d8 #b8b8b8;background:#c2c2c2"><div class="a" style="left:7.5px;top:15px;width:1.6px;height:1.3px;background:#b4b0ac;box-shadow:3.8px 0 0 #b4b0ac,7.6px 0 0 #b4b0ac"></div></div>
<div class="btn" style="left:1210px;top:526px;width:26px;height:25px;border-color:#b8b8b8 #b4c4d8 #b4c4d8 #b8b8b8;background:#c2c2c2"><svg class="a" style="left:7px;top:3px" width="10" height="16" viewBox="0 0 10 16"><path d="M4.3 5 V11.8 Q4.3 13 5.2 13 Q6.1 13 6.1 11.8 V3.2 Q6.1 1.2 4.6 1.2 Q2.6 1.2 2.6 3.2 V12 Q2.6 14.8 5.2 14.8 Q7.8 14.8 7.8 12 V4.5" fill="none" stroke="#a4a4a4" stroke-width="1"/></svg></div>
<div class="c" style="left:58px;top:551px;width:42px;height:26px;line-height:24px"></div>
<div class="c" style="left:101px;top:551px;width:26px;height:26px;line-height:24px"></div>
<div class="c" style="left:128px;top:551px;width:69px;height:26px;line-height:24px;text-align:right;padding-right:2px"></div>
<div class="c" style="left:198px;top:551px;width:71px;height:26px;line-height:24px"></div>
<div class="c" style="left:270px;top:551px;width:89px;height:26px;line-height:24px"></div>
<div class="c g" style="left:360px;top:551px;width:71px;height:26px;line-height:24px"></div>
<div class="c g" style="left:432px;top:551px;width:89px;height:26px;line-height:24px"></div>
<div class="c" style="left:522px;top:551px;width:70px;height:26px;line-height:24px"></div>
<div class="c" style="left:594px;top:551px;width:88px;height:26px;line-height:24px"></div>
<div class="c g" style="left:684px;top:551px;width:74px;height:26px;line-height:24px"></div>
<div class="c g" style="left:758px;top:551px;width:89px;height:26px;line-height:24px"></div>
<div class="c" style="left:848px;top:551px;width:75px;height:26px;line-height:24px"></div>
<div class="c" style="left:924px;top:551px;width:89px;height:26px;line-height:24px"></div>
<div class="c g" style="left:1014px;top:551px;width:73px;height:26px;line-height:24px"></div>
<div class="c g" style="left:1088px;top:551px;width:90px;height:26px;line-height:24px"></div>
<div class="btn" style="left:1182px;top:553px;width:25px;height:25px;border-color:#b8b8b8 #b4c4d8 #b4c4d8 #b8b8b8;background:#c2c2c2"><div class="a" style="left:7.5px;top:15px;width:1.6px;height:1.3px;background:#b4b0ac;box-shadow:3.8px 0 0 #b4b0ac,7.6px 0 0 #b4b0ac"></div></div>
<div class="btn" style="left:1210px;top:553px;width:26px;height:25px;border-color:#b8b8b8 #b4c4d8 #b4c4d8 #b8b8b8;background:#c2c2c2"><svg class="a" style="left:7px;top:3px" width="10" height="16" viewBox="0 0 10 16"><path d="M4.3 5 V11.8 Q4.3 13 5.2 13 Q6.1 13 6.1 11.8 V3.2 Q6.1 1.2 4.6 1.2 Q2.6 1.2 2.6 3.2 V12 Q2.6 14.8 5.2 14.8 Q7.8 14.8 7.8 12 V4.5" fill="none" stroke="#a4a4a4" stroke-width="1"/></svg></div>
<div class="a" style="left:33px;top:373px;width:12.5px;height:193px;background:#e7ebf3;border:1px solid #d6dfec;border-radius:6px"></div>
<div class="a" style="left:33.5px;top:373.5px;width:11.5px;height:12px;background:#eef2f8;border-radius:6px 6px 0 0"></div>
<div class="a" style="left:33.5px;top:553px;width:11.5px;height:12.5px;background:#eef2f8;border-radius:0 0 6px 6px"></div>
<svg class="a" style="left:33px;top:373px" width="13" height="193" viewBox="0 0 13 193"><path d="M3 9 L6.3 5.2 L9.6 9 Z" fill="#5e6078"/><rect x="1" y="12" width="11" height="1.6" fill="#b2b8c8"/><rect x="1" y="178.5" width="11" height="1.6" fill="#b2b8c8"/><path d="M3.3 183 L6.3 186.5 L9.3 183 Z" fill="#5e6078"/><circle cx="4.6" cy="69.70" r="0.75" fill="#8f9cb0"/><circle cx="4.6" cy="68.80" r="0.5" fill="#fff"/><circle cx="8.8" cy="73.45" r="0.75" fill="#8f9cb0"/><circle cx="8.8" cy="72.55" r="0.5" fill="#fff"/><circle cx="4.6" cy="77.20" r="0.75" fill="#8f9cb0"/><circle cx="4.6" cy="76.30" r="0.5" fill="#fff"/><circle cx="8.8" cy="80.95" r="0.75" fill="#8f9cb0"/><circle cx="8.8" cy="80.05" r="0.5" fill="#fff"/><circle cx="4.6" cy="84.70" r="0.75" fill="#8f9cb0"/><circle cx="4.6" cy="83.80" r="0.5" fill="#fff"/><circle cx="8.8" cy="88.45" r="0.75" fill="#8f9cb0"/><circle cx="8.8" cy="87.55" r="0.5" fill="#fff"/><circle cx="4.6" cy="92.20" r="0.75" fill="#8f9cb0"/><circle cx="4.6" cy="91.30" r="0.5" fill="#fff"/><circle cx="8.8" cy="95.95" r="0.75" fill="#8f9cb0"/><circle cx="8.8" cy="95.05" r="0.5" fill="#fff"/><circle cx="4.6" cy="99.70" r="0.75" fill="#8f9cb0"/><circle cx="4.6" cy="98.80" r="0.5" fill="#fff"/><circle cx="8.8" cy="103.45" r="0.75" fill="#8f9cb0"/><circle cx="8.8" cy="102.55" r="0.5" fill="#fff"/><circle cx="4.6" cy="107.20" r="0.75" fill="#8f9cb0"/><circle cx="4.6" cy="106.30" r="0.5" fill="#fff"/><circle cx="8.8" cy="110.95" r="0.75" fill="#8f9cb0"/><circle cx="8.8" cy="110.05" r="0.5" fill="#fff"/></svg>
<div class="btn" style="left:366px;top:581px;width:154px;height:25px;line-height:23px">CANCELAR APROVACAO</div>
<div class="btn" style="left:884px;top:584px;width:154px;height:24px;line-height:22px">CANCELAR APROVACAO</div>
<!--/TABLE-->


<!-- lower form -->
<div class="lbl" style="right:1073px;top:630px">Pessoa</div>
<div class="lbl" style="right:1073px;top:654px">Empresa / Filial Caixa</div>
<div class="fld" style="left:216px;top:623px;width:113px;height:23px;text-align:center;font-size:15px;letter-spacing:0.6px;line-height:27px;color:#303038;padding-left:2px">******</div>
<div class="fld" style="left:330px;top:623px;width:610px;height:23px;padding-left:0"><span class="s" style="left:-2px;top:2px">SUPORTE</span></div>
<div class="fld" style="left:216px;top:647px;width:56px;height:23px;text-align:center">385</div>
<div class="fld" style="left:272px;top:647px;width:57px;height:23px;text-align:center">1</div>
<div class="fld" style="left:330px;top:647px;width:610px;height:23px;padding-left:1px">DENVER TECNOLOGIA LTDA.</div>

<!-- tabs -->
<div class="tab" style="left:5px;width:130px">Solicitacao Numerario</div>
<div class="tab" style="left:137px;width:126px">Acerto Numerario</div>
<div class="tab" style="left:266px;width:125px">Reembolso Numerario</div>
<div class="tab" style="left:394px;width:126px">Conta Corrente</div>
<div class="tab" style="left:523px;width:125px">Cadastros</div>
<div class="tab" style="left:647.5px;top:706px;width:132.5px;height:26.5px;background:#93b6da;border:3.3px solid #ff0000;border-radius:3px;color:#202030;line-height:22px">Consulta</div>
<div class="tab" style="left:780px;width:126px">Gerenciamento</div>
<div class="tab" style="left:909px;width:125px">Relatorios</div>

</body></html>
